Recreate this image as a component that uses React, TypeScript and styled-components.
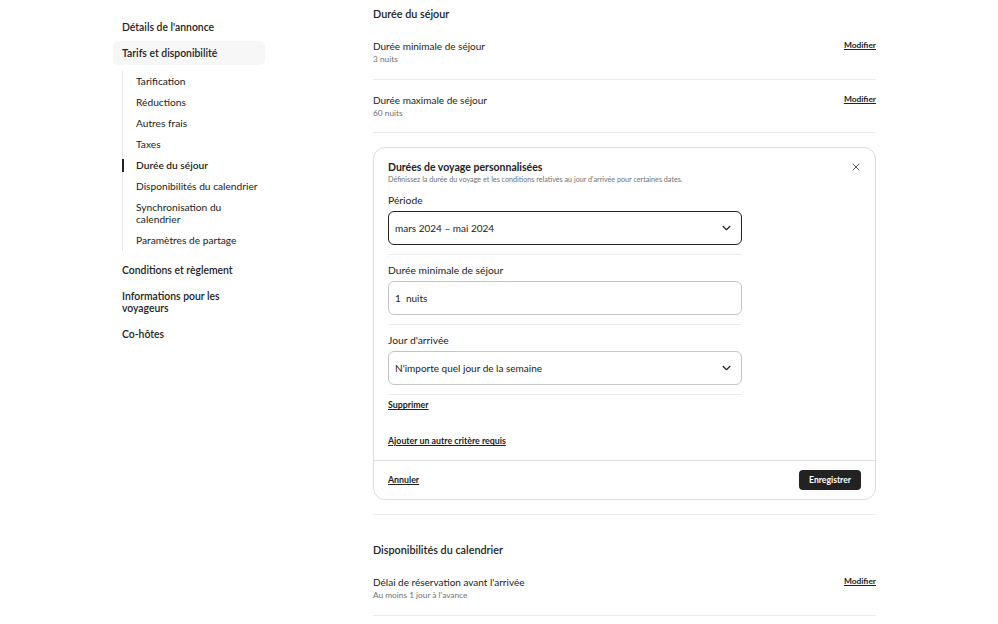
import styled, { createGlobalStyle } from 'styled-components';

const GlobalStyle = createGlobalStyle`
  html, body {
    margin: 0;
    padding: 0;
    background: #fff;
  }
  body {
    font-family: Lato, "Noto Sans", "Liberation Sans", sans-serif;
    color: #222;
    -webkit-font-smoothing: antialiased;
  }
`;

const subItems = [
  'Tarification',
  'Réductions',
  'Autres frais',
  'Taxes',
  'Durée du séjour',
  'Disponibilités du calendrier',
  'Synchronisation du calendrier',
  'Paramètres de partage',
];

const Chevron = () => (
  <svg width="9" height="6" viewBox="0 0 9 6" fill="none">
    <path d="M1 1.3l3.5 3.4L8 1.3" stroke="#222" strokeWidth="1.2" strokeLinecap="round" strokeLinejoin="round" />
  </svg>
);

const CloseIcon = () => (
  <svg width="8" height="8" viewBox="0 0 8 8" fill="none">
    <path d="M1 1l6 6M7 1L1 7" stroke="#555" strokeWidth="1" strokeLinecap="round" />
  </svg>
);

const App = () => {
  return (
    <>
      <GlobalStyle />
      <Page>
        <Sidebar>
          <NavItem>Détails de l'annonce</NavItem>
          <NavItem $selected>Tarifs et disponibilité</NavItem>
          <SubList>
            {subItems.map((label) => (
              <SubItem key={label} $active={label === 'Durée du séjour'}>
                {label === 'Synchronisation du calendrier' ? (
                  <>
                    Synchronisation du
                    <br />
                    calendrier
                  </>
                ) : (
                  label
                )}
              </SubItem>
            ))}
          </SubList>
          <NavItem $spaced>Conditions et règlement</NavItem>
          <NavItem>
            Informations pour les
            <br />
            voyageurs
          </NavItem>
          <NavItem>Co-hôtes</NavItem>
        </Sidebar>

        <Main>
          <SectionTitle>Durée du séjour</SectionTitle>
          <SettingRow>
            <RowText>
              <RowTitle>Durée minimale de séjour</RowTitle>
              <RowValue>3 nuits</RowValue>
            </RowText>
            <LinkButton>Modifier</LinkButton>
          </SettingRow>
          <SettingRow>
            <RowText>
              <RowTitle>Durée maximale de séjour</RowTitle>
              <RowValue>60 nuits</RowValue>
            </RowText>
            <LinkButton>Modifier</LinkButton>
          </SettingRow>

          <CardWrap>
            <Card>
              <CardBody>
                <CardHeader>
                  <div>
                    <CardTitle>Durées de voyage personnalisées</CardTitle>
                    <CardSubtitle>
                      Définissez la durée du voyage et les conditions relatives au jour d'arrivée pour certaines dates.
                    </CardSubtitle>
                  </div>
                  <CloseButton>
                    <CloseIcon />
                  </CloseButton>
                </CardHeader>

                <Field>
                  <FieldLabel>Période</FieldLabel>
                  <InputBox $focused>
                    <span>mars 2024 – mai 2024</span>
                    <Chevron />
                  </InputBox>
                </Field>
                <Field>
                  <FieldLabel>Durée minimale de séjour</FieldLabel>
                  <InputBox>
                    <span>1&nbsp; nuits</span>
                  </InputBox>
                </Field>
                <Field>
                  <FieldLabel>Jour d'arrivée</FieldLabel>
                  <InputBox>
                    <span>N'importe quel jour de la semaine</span>
                    <Chevron />
                  </InputBox>
                </Field>

                <TextLink $top={4}>Supprimer</TextLink>
                <TextLink $top={24}>Ajouter un autre critère requis</TextLink>
              </CardBody>
              <CardFooter>
                <TextLink>Annuler</TextLink>
                <SaveButton>Enregistrer</SaveButton>
              </CardFooter>
            </Card>
          </CardWrap>

          <SectionTitle $spaced>Disponibilités du calendrier</SectionTitle>
          <SettingRow>
            <RowText>
              <RowTitle>Délai de réservation avant l'arrivée</RowTitle>
              <RowValue>Au moins 1 jour à l'avance</RowValue>
            </RowText>
            <LinkButton>Modifier</LinkButton>
          </SettingRow>
        </Main>
      </Page>
    </>
  );
};

export default App;

const Page = styled.div`
  display: flex;
  align-items: flex-start;
  gap: 108px;
  padding-left: 113px;
  height: 624px;
  overflow: hidden;
`;

const Sidebar = styled.nav`
  width: 152px;
  flex-shrink: 0;
  padding-top: 15px;
  display: flex;
  flex-direction: column;
`;

const NavItem = styled.div<{ $selected?: boolean; $spaced?: boolean }>`
  padding: 6px 9px;
  margin-bottom: 2px;
  margin-top: ${({ $spaced }) => ($spaced ? '7px' : '0')};
  font-size: 10.4px;
  line-height: 12px;
  font-weight: 600;
  border-radius: 5px;
  background: ${({ $selected }) => ($selected ? '#f7f7f7' : 'transparent')};
`;

const SubList = styled.div`
  margin: 3.5px 0 0 9px;
  border-left: 1px solid #e4e4e4;
  padding-left: 13px;
  display: flex;
  flex-direction: column;
`;

const SubItem = styled.div<{ $active?: boolean }>`
  position: relative;
  padding: 4.5px 0;
  font-size: 10.2px;
  line-height: 12px;
  font-weight: ${({ $active }) => ($active ? 600 : 400)};
  color: #222;

  &::before {
    content: '';
    display: ${({ $active }) => ($active ? 'block' : 'none')};
    position: absolute;
    left: -14px;
    top: 4px;
    width: 2px;
    height: 13px;
    background: #222;
  }
`;

const Main = styled.main`
  width: 503px;
  flex-shrink: 0;
`;

const SectionTitle = styled.h2<{ $spaced?: boolean }>`
  margin: ${({ $spaced }) => ($spaced ? '21px' : '0')} 0 0;
  padding: 7px 0 5px;
  font-size: 10.8px;
  line-height: 14px;
  font-weight: 600;
`;

const SettingRow = styled.div`
  display: flex;
  justify-content: space-between;
  align-items: flex-start;
  padding: 13px 0 13.5px;
  border-bottom: 1px solid #ebebeb;
`;

const RowText = styled.div`
  display: flex;
  flex-direction: column;
`;

const RowTitle = styled.div`
  font-size: 10px;
  line-height: 14px;
  color: #222;
`;

const RowValue = styled.div`
  font-size: 8.3px;
  line-height: 12px;
  color: #717171;
`;

const LinkButton = styled.button`
  border: none;
  background: none;
  padding: 0;
  margin-top: 0;
  font-family: inherit;
  font-size: 8.4px;
  line-height: 12px;
  font-weight: 700;
  color: #222;
  text-decoration: underline;
  cursor: pointer;
`;

const CardWrap = styled.div`
  padding: 14px 0;
  border-bottom: 1px solid #ebebeb;
`;

const Card = styled.section`
  border: 1px solid #dddddd;
  border-radius: 12px;
  overflow: hidden;
`;

const CardBody = styled.div`
  padding: 12px 14px 13px;
  display: flex;
  flex-direction: column;
  align-items: flex-start;
`;

const CardHeader = styled.div`
  width: 100%;
  display: flex;
  justify-content: space-between;
  align-items: flex-start;
`;

const CardTitle = styled.h3`
  margin: 0;
  font-size: 10.5px;
  line-height: 14px;
  font-weight: 700;
`;

const CardSubtitle = styled.p`
  margin: 1px 0 0;
  font-size: 7.2px;
  line-height: 10px;
  color: #717171;
`;

const CloseButton = styled.button`
  border: none;
  background: none;
  padding: 0;
  margin: 3px 1px 0 0;
  display: flex;
  cursor: pointer;
`;

const Field = styled.div`
  width: 354px;
  padding: 8px 0 9px;
  border-bottom: 1px solid #ebebeb;
  display: flex;
  flex-direction: column;
  gap: 4px;
`;

const FieldLabel = styled.label`
  font-size: 10.3px;
  line-height: 14px;
  color: #222;
`;

const InputBox = styled.div<{ $focused?: boolean }>`
  box-sizing: border-box;
  height: 34px;
  display: flex;
  align-items: center;
  justify-content: space-between;
  padding: 0 10px 0 6px;
  border: ${({ $focused }) => ($focused ? '1.5px solid #222' : '1px solid #c4c4c4')};
  border-radius: 6px;
  font-size: 10px;
  color: #222;
`;

const TextLink = styled.button<{ $top?: number }>`
  border: none;
  background: none;
  padding: 0;
  margin-top: ${({ $top }) => $top ?? 0}px;
  font-family: inherit;
  font-size: 8.8px;
  line-height: 12px;
  font-weight: 700;
  color: #222;
  text-decoration: underline;
  cursor: pointer;
`;

const CardFooter = styled.div`
  display: flex;
  justify-content: space-between;
  align-items: center;
  padding: 9px 14px;
  border-top: 1px solid #dddddd;
`;

const SaveButton = styled.button`
  height: 20px;
  padding: 0 10px;
  border: none;
  border-radius: 4px;
  background: #222;
  color: #fff;
  font-family: inherit;
  font-size: 8.6px;
  font-weight: 700;
  cursor: pointer;
`;
